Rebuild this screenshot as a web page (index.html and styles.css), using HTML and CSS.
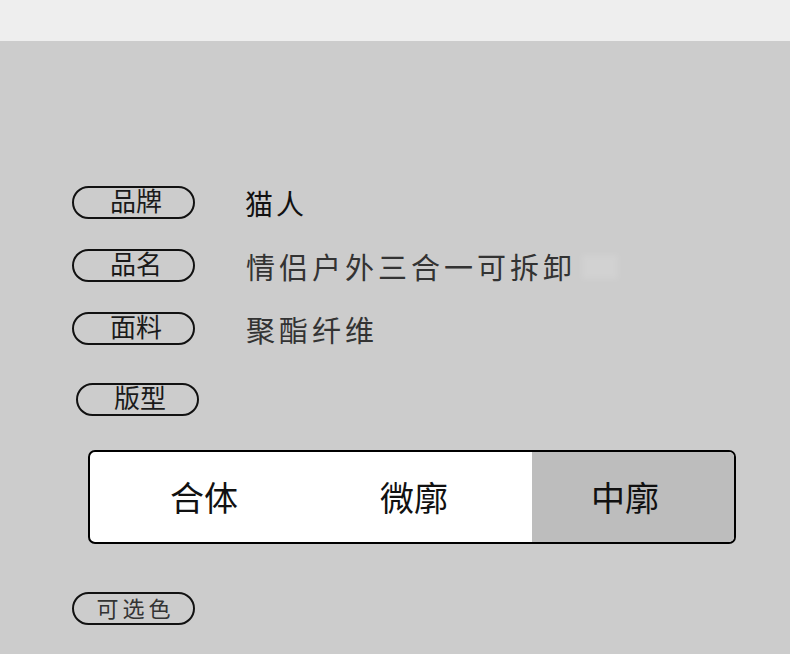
FILE: index.html
```html
<!DOCTYPE html>
<html lang="zh-CN">
<head>
  <meta charset="UTF-8">
  <meta name="viewport" content="width=device-width, initial-scale=1.0">
  <link rel="stylesheet" href="styles.css">
  <title>商品参数</title>
</head>
<body>

  <div class="topbar"></div>

  <div class="spec">
    <!-- 基本信息 -->
    <div class="row">
      <span class="tag">品牌</span>
      <span class="value value-brand">猫人</span>
    </div>
    <div class="row">
      <span class="tag">品名</span>
      <span class="value">情侣户外三合一可拆卸<span class="fade"></span></span>
    </div>
    <div class="row">
      <span class="tag">面料</span>
      <span class="value">聚酯纤维</span>
    </div>

    <!-- 版型 -->
    <div class="row row-fit">
      <span class="tag">版型</span>
    </div>
    <div class="fit-options">
      <div class="fit-option fit-first">合体</div>
      <div class="fit-option fit-second">微廓</div>
      <div class="fit-option fit-third active">中廓</div>
    </div>

    <div class="row row-color">
      <span class="tag tag-spaced">可选色</span>
    </div>
  </div>

</body>
</html>
```

FILE: styles.css
```css
body {
  margin: 0;
  background-color: #cccccc;
  font-family: "Noto Sans CJK SC", "Liberation Sans", sans-serif;
  color: #222;
}

.topbar {
  height: 41px;
  background-color: #eeeeee;
}

.spec {
  padding: 145px 0 0 72px;
}

.row {
  display: flex;
  align-items: center;
  height: 33px;
  margin-bottom: 30px;
}

.tag {
  box-sizing: border-box;
  width: 123px;
  height: 33px;
  border: 2px solid #111;
  border-radius: 17px;
  display: flex;
  align-items: center;
  justify-content: center;
  padding: 0 0 5px 5px;
  font-size: 26px;
  line-height: 1;
  color: #1a1a1a;
}

.tag-spaced {
  font-size: 22px;
  letter-spacing: 4px;
  color: #333;
  padding: 0 0 4px 4px;
}

.value {
  margin-left: 51px;
  font-size: 29px;
  letter-spacing: 4px;
  color: #333;
  position: relative;
}

.value-brand {
  margin-left: 50px;
  font-size: 28px;
  letter-spacing: 3px;
  color: #111;
}

/* 卸 后面的淡色残影 */
.fade {
  position: absolute;
  right: -42px;
  top: 10px;
  width: 36px;
  height: 24px;
  background: rgba(255, 255, 255, 0.12);
  filter: blur(3px);
}

.row-fit {
  margin-top: 38px;
  margin-left: 4px;
  margin-bottom: 34px;
}

.fit-options {
  display: flex;
  box-sizing: border-box;
  width: 648px;
  height: 94px;
  margin-left: 16px;
  border: 2px solid #000;
  border-radius: 7px;
  background-color: #fff;
  overflow: hidden;
}

.fit-option {
  display: flex;
  align-items: center;
  justify-content: center;
  font-size: 34px;
  color: #111;
  padding-bottom: 2px;
}

.fit-first {
  width: 228px;
}

.fit-second {
  width: 214px;
  padding-right: 22px;
  box-sizing: border-box;
}

.fit-third {
  flex: 1;
  padding-right: 16px;
}

.fit-option.active {
  background-color: #bdbdbd;
}

.row-color {
  margin-top: 48px;
}
```
